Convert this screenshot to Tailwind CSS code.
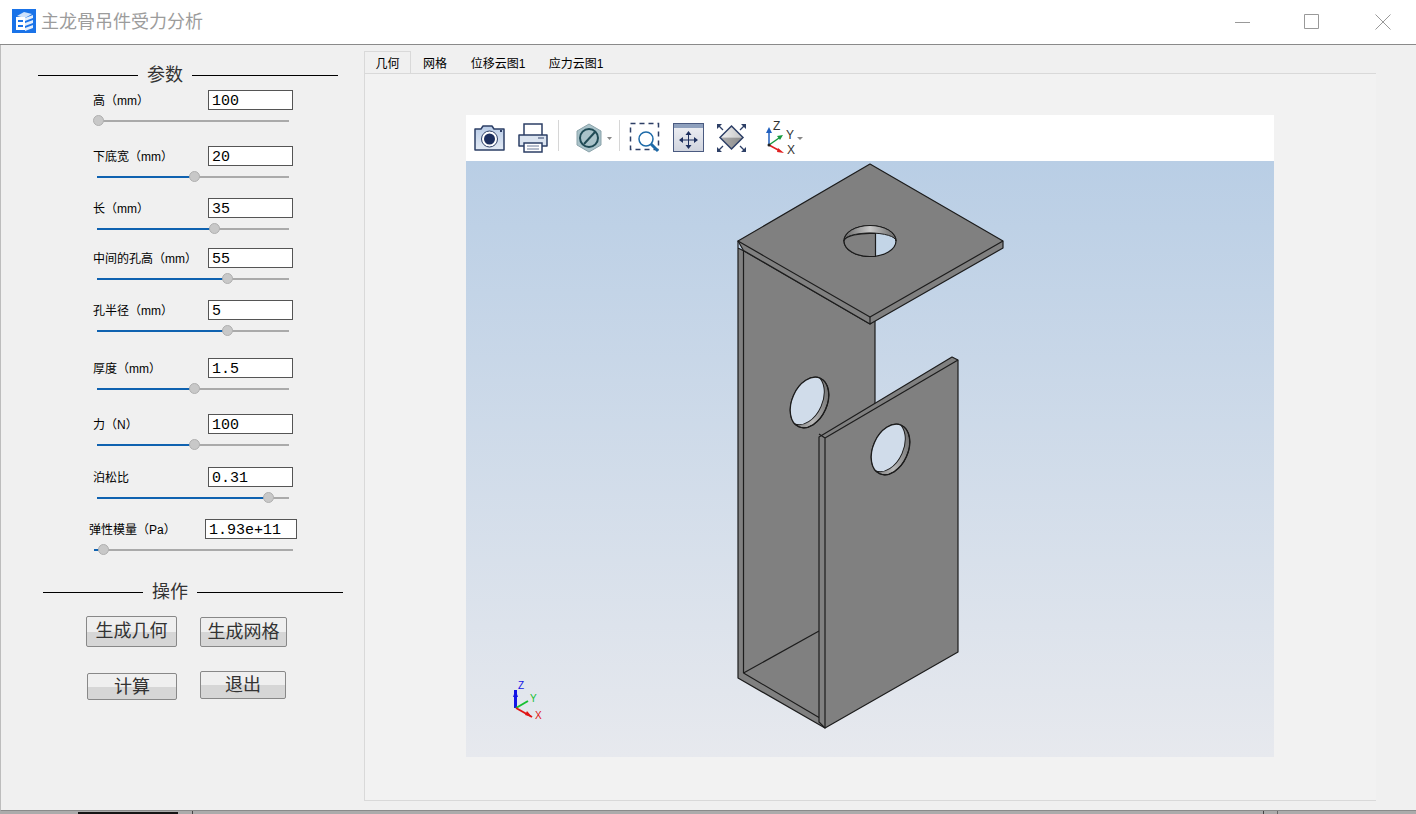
<!DOCTYPE html>
<html lang="zh">
<head>
  <meta charset="UTF-8" />
  <title>主龙骨吊件受力分析</title>
  <script src="https://cdn.jsdelivr.net/npm/@tailwindcss/browser@4"></script>
</head>
<body class="w-[1416px] h-[814px] overflow-hidden bg-[#f0f0f0] font-['Liberation_Sans','Noto_Sans_CJK_SC',sans-serif] text-black">
  <!-- title bar -->
  <header class="h-[45px] bg-white border-b border-[#8a8a8a] flex items-center pl-3">
    <svg width="24" height="24" viewBox="0 0 24 24" class="mb-[2px]">
      <rect width="24" height="24" fill="#1a73e8"/>
      <path d="M5 7 12 3l8 2-7 4z" fill="#cfe2fb"/>
      <path d="M4 8h9v13H4z" fill="#fff"/>
      <path d="M6 11h5v2H6zM6 16h5v2H6z" fill="#1a73e8"/>
      <path d="M13 9l8-3v3l-8 3zM13 14l8-3v3l-8 3zM13 19l8-3v3l-8 3z" fill="#e3eefc"/>
    </svg>
    <span class="ml-[5px] text-[18px] text-[#9c9c9c]">主龙骨吊件受力分析</span>
    <div class="ml-auto flex items-center">
      <svg width="16" height="16" viewBox="0 0 16 16" class="mr-[53px]"><path d="M0 8.500h15" stroke="#999" fill="none"/></svg>
      <svg width="16" height="16" viewBox="0 0 16 16" class="mr-[55px]"><path d="M.5.5h14v14H.5z" stroke="#999" fill="none"/></svg>
      <svg width="16" height="16" viewBox="0 0 16 16" class="mr-[25px]"><path d="M.5.5l15 15M15.500.5l-15 15" stroke="#999" fill="none"/></svg>
    </div>
  </header>

  <div class="flex h-[766px] border-l border-[#bdbdbd] border-b border-b-[#8a8a8a]">
    <!-- parameters -->
    <aside class="w-[363px] shrink-0">
      <div class="flex items-center ml-[37px] w-[300px] h-[20px] mt-[20px]">
        <span class="h-px flex-1 bg-black"></span>
        <span class="w-[54px] text-center text-[18px] text-[#333]">参数</span>
        <span class="h-px w-[146px] bg-black"></span>
      </div>
      <div class="ml-[92px] w-[200px] text-[12px]">
        <!-- 高 -->
        <div class="flex items-center h-[20px] mt-[5px]"><span class="w-[115px] pt-[2px]">高（mm）</span><span class="w-[85px] h-[20px] bg-white border border-[#555] font-['Liberation_Mono',monospace] text-[15px] leading-[20px] pl-[3px] pt-px">100</span></div>
        <div class="relative h-[36px] pt-[10px]"><div class="h-[2px] ml-[4px] w-[192px] bg-[#aaa]"></div><span class="absolute left-0 top-[5px] size-[11px] rounded-full bg-[#c8c8c8] border border-[#b0b0b0]"></span></div>

        <div class="flex items-center h-[20px]"><span class="w-[115px] pt-[2px]">下底宽（mm）</span><span class="w-[85px] h-[20px] bg-white border border-[#555] font-['Liberation_Mono',monospace] text-[15px] leading-[20px] pl-[3px] pt-px">20</span></div>
        <div class="relative h-[32px] pt-[10px]"><div class="h-[2px] ml-[4px] w-[192px] bg-[#aaa]"><div class="h-[2px] w-[97px] bg-[#0f62b0]"></div></div><span class="absolute left-[96px] top-[5px] size-[11px] rounded-full bg-[#c8c8c8] border border-[#b0b0b0]"></span></div>

        <div class="flex items-center h-[20px]"><span class="w-[115px] pt-[2px]">长（mm）</span><span class="w-[85px] h-[20px] bg-white border border-[#555] font-['Liberation_Mono',monospace] text-[15px] leading-[20px] pl-[3px] pt-px">35</span></div>
        <div class="relative h-[30px] pt-[10px]"><div class="h-[2px] ml-[4px] w-[192px] bg-[#aaa]"><div class="h-[2px] w-[117px] bg-[#0f62b0]"></div></div><span class="absolute left-[116px] top-[5px] size-[11px] rounded-full bg-[#c8c8c8] border border-[#b0b0b0]"></span></div>

        <div class="flex items-center h-[20px]"><span class="w-[115px] pt-[2px]">中间的孔高（mm）</span><span class="w-[85px] h-[20px] bg-white border border-[#555] font-['Liberation_Mono',monospace] text-[15px] leading-[20px] pl-[3px] pt-px">55</span></div>
        <div class="relative h-[32px] pt-[10px]"><div class="h-[2px] ml-[4px] w-[192px] bg-[#aaa]"><div class="h-[2px] w-[130px] bg-[#0f62b0]"></div></div><span class="absolute left-[129px] top-[5px] size-[11px] rounded-full bg-[#c8c8c8] border border-[#b0b0b0]"></span></div>

        <div class="flex items-center h-[20px]"><span class="w-[115px] pt-[2px]">孔半径（mm）</span><span class="w-[85px] h-[20px] bg-white border border-[#555] font-['Liberation_Mono',monospace] text-[15px] leading-[20px] pl-[3px] pt-px">5</span></div>
        <div class="relative h-[38px] pt-[10px]"><div class="h-[2px] ml-[4px] w-[192px] bg-[#aaa]"><div class="h-[2px] w-[130px] bg-[#0f62b0]"></div></div><span class="absolute left-[129px] top-[5px] size-[11px] rounded-full bg-[#c8c8c8] border border-[#b0b0b0]"></span></div>

        <div class="flex items-center h-[20px]"><span class="w-[115px] pt-[2px]">厚度（mm）</span><span class="w-[85px] h-[20px] bg-white border border-[#555] font-['Liberation_Mono',monospace] text-[15px] leading-[20px] pl-[3px] pt-px">1.5</span></div>
        <div class="relative h-[36px] pt-[10px]"><div class="h-[2px] ml-[4px] w-[192px] bg-[#aaa]"><div class="h-[2px] w-[97px] bg-[#0f62b0]"></div></div><span class="absolute left-[96px] top-[5px] size-[11px] rounded-full bg-[#c8c8c8] border border-[#b0b0b0]"></span></div>

        <div class="flex items-center h-[20px]"><span class="w-[115px] pt-[2px]">力（N）</span><span class="w-[85px] h-[20px] bg-white border border-[#555] font-['Liberation_Mono',monospace] text-[15px] leading-[20px] pl-[3px] pt-px">100</span></div>
        <div class="relative h-[33px] pt-[10px]"><div class="h-[2px] ml-[4px] w-[192px] bg-[#aaa]"><div class="h-[2px] w-[97px] bg-[#0f62b0]"></div></div><span class="absolute left-[96px] top-[5px] size-[11px] rounded-full bg-[#c8c8c8] border border-[#b0b0b0]"></span></div>

        <div class="flex items-center h-[20px]"><span class="w-[115px] pt-[2px]">泊松比</span><span class="w-[85px] h-[20px] bg-white border border-[#555] font-['Liberation_Mono',monospace] text-[15px] leading-[20px] pl-[3px] pt-px">0.31</span></div>
        <div class="relative h-[32px] pt-[10px]"><div class="h-[2px] ml-[4px] w-[192px] bg-[#aaa]"><div class="h-[2px] w-[171px] bg-[#0f62b0]"></div></div><span class="absolute left-[170px] top-[5px] size-[11px] rounded-full bg-[#c8c8c8] border border-[#b0b0b0]"></span></div>

        <div class="flex items-center h-[20px] -ml-[4px] w-[208px]"><span class="w-[116px] pt-[2px]">弹性模量（Pa）</span><span class="w-[92px] h-[20px] bg-white border border-[#555] font-['Liberation_Mono',monospace] text-[15px] leading-[20px] pl-[3px] pt-px whitespace-nowrap">1.93e+11</span></div>
        <div class="relative h-[30px] pt-[10px] -ml-[4px] w-[208px]"><div class="h-[2px] ml-[5px] w-[199px] bg-[#aaa]"><div class="h-[2px] w-[8px] bg-[#0f62b0]"></div></div><span class="absolute left-[9px] top-[5px] size-[11px] rounded-full bg-[#c8c8c8] border border-[#b0b0b0]"></span></div>
      </div>

      <div class="flex items-center ml-[42px] w-[300px] h-[20px] mt-[13px]">
        <span class="h-px flex-1 bg-black"></span>
        <span class="w-[54px] text-center text-[18px] text-[#333]">操作</span>
        <span class="h-px w-[146px] bg-black"></span>
      </div>
      <div class="ml-[85px] mt-[14px] flex items-start text-[18px] text-[#333]">
        <button class="w-[91px] h-[31px] rounded-[2px] border border-[#888] bg-[linear-gradient(#efefef_50%,#d6d6d6_50%)]">生成几何</button>
        <button class="ml-[23px] mt-[1px] w-[87px] h-[30px] rounded-[2px] border border-[#888] bg-[linear-gradient(#efefef_50%,#d6d6d6_50%)] whitespace-nowrap">生成网格</button>
      </div>
      <div class="ml-[86px] mt-[24px] flex items-start text-[18px] text-[#333]">
        <button class="mt-[2px] w-[90px] h-[27px] rounded-[2px] border border-[#888] bg-[linear-gradient(#efefef_50%,#d6d6d6_50%)]">计算</button>
        <button class="ml-[23px] w-[86px] h-[28px] rounded-[2px] border border-[#888] bg-[linear-gradient(#efefef_50%,#d6d6d6_50%)]">退出</button>
      </div>
    </aside>

    <!-- tabs + viewer -->
    <main class="w-[1012px] pt-[6px]">
      <div class="flex items-end h-[22px] text-[12px]">
        <span class="w-[47px] h-[22px] flex items-center justify-center pt-[2px] border border-b-0 border-[#d9d9d9] bg-[#f0f0f0]">几何</span>
        <span class="w-[48px] text-center">网格</span>
        <span class="w-[78px] text-center">位移云图1</span>
        <span class="w-[78px] text-center">应力云图1</span>
      </div>
      <div class="h-[728px] border border-[#d9d9d9] border-r-0 bg-[#f2f2f2] pt-[41px] pl-[101px]">
        <div class="w-[808px] h-[46px] bg-white relative">
          <svg width="808" height="46" viewBox="0 0 808 46" class="block">
            <defs>
              <linearGradient id="camBody" x1="0" y1="0" x2="0" y2="1"><stop offset="0" stop-color="#b8cbe6"/><stop offset="1" stop-color="#e4ebf5"/></linearGradient>
              <linearGradient id="fitBody" x1="0" y1="0" x2="0" y2="1"><stop offset="0" stop-color="#f0f1f5"/><stop offset="1" stop-color="#d0d4de"/></linearGradient>
              <linearGradient id="diaTop" x1="0" y1="0" x2="1" y2="0"><stop offset="0" stop-color="#f2f2f2"/><stop offset="1" stop-color="#c4c4c4"/></linearGradient>
              <linearGradient id="diaBot" x1="0" y1="0" x2="1" y2="0"><stop offset="0" stop-color="#b0b0b0"/><stop offset="1" stop-color="#8a8a8a"/></linearGradient>
            </defs>
            <!-- camera -->
            <path d="M9 14h6l2-3h9l2 3h10v21H9z" fill="url(#camBody)" stroke="#2d3f66" stroke-width="1.500" stroke-linejoin="round"/>
            <circle cx="23.500" cy="24" r="8" fill="#fff" stroke="#2d3f66"/>
            <circle cx="23.500" cy="24" r="5.500" fill="#1d2f5e"/>
            <rect x="34" y="15" width="2" height="2" fill="#2d3f66"/>
            <!-- printer -->
            <path d="M58 20V9h18v11" fill="#fff" stroke="#2d3f66" stroke-width="1.500"/>
            <path d="M53 31V20h28v11z" fill="#dbe4f0" stroke="#2d3f66" stroke-width="1.500" stroke-linejoin="round"/>
            <path d="M58 28h18v9H58z" fill="#fff" stroke="#2d3f66" stroke-width="1.500"/>
            <path d="M61 31h12M61 34h12" stroke="#6b7a99"/>
            <path d="M72 23h6" stroke="#6b7a99" stroke-width="1.500"/>
            <path d="M92.500 5v31M153.500 5v31" stroke="#d6d6d6"/>
            <!-- section plane -->
            <path d="M123 9l12 7v14l-12 7-12-7V16z" fill="#a9c2c9" stroke="#8ba3aa" stroke-width="1"/>
            <circle cx="123" cy="23" r="9" fill="#a9c2c9" stroke="#1f4a55" stroke-width="2"/>
            <path d="M118 29l11-12" stroke="#1f4a55" stroke-width="2"/>
            <path d="M141 22h5l-2.500 3z" fill="#888"/>
            <!-- zoom window -->
            <path d="M164.500 8.500h28v26h-28z" fill="none" stroke="#2d3f66" stroke-width="1.500" stroke-dasharray="5 4"/>
            <circle cx="180" cy="24" r="7" fill="#fff" stroke="#1d6aa8" stroke-width="1.500"/>
            <path d="M185 29l7 7" stroke="#1d6aa8" stroke-width="3"/>
            <!-- fit -->
            <rect x="207.500" y="8.500" width="30" height="28" fill="url(#fitBody)" stroke="#4a5a80"/>
            <rect x="208" y="9" width="29" height="4" fill="#8ea0bd"/>
            <path d="M222.500 19v12M216 25h13" stroke="#1d2f5e" fill="none"/>
            <path d="M222.500 16l-3 4h6zM222.500 34l-3-4h6zM213 25l4-3v6zM232 25l-4-3v6z" fill="#1d2f5e"/>
            <!-- zoom to area -->
            <path d="M254 22.500L265.500 11 277 22.500z" fill="url(#diaTop)"/>
            <path d="M254 22.500L265.500 34 277 22.500z" fill="url(#diaBot)"/>
            <path d="M265.500 11L277 22.500 265.500 34 254 22.500z" fill="none" stroke="#2d3f66" stroke-width="1.500"/>
            <path d="M253 11l4 4M278 11l-4 4M253 35l4-4M278 35l-4-4" stroke="#2d3f66" stroke-width="1.300"/>
            <path d="M251 9h5l-5 5zM280 9h-5l5 5zM251 37h5l-5-5zM280 37h-5l5-5z" fill="#2d3f66"/>
            <!-- triad -->
            <path d="M303 30V16" stroke="#1f5fbf" stroke-width="1.500"/><path d="M303 12l-3 6h6z" fill="#1f5fbf"/>
            <path d="M303 30l10-7" stroke="#179a3f" stroke-width="1.500"/><path d="M317 20l-6 1 3 4z" fill="#179a3f"/>
            <path d="M303 30l11 6" stroke="#e02020" stroke-width="1.500"/><path d="M318 38l-6-5-1 4z" fill="#e02020"/>
            <circle cx="303" cy="30" r="1.500" fill="#222"/>
            <path d="M331 22h6l-3 3z" fill="#888"/>
          </svg>
          <span class="absolute left-[307px] top-[5px] text-[12px] leading-[12px] text-[#333]">Z</span>
          <span class="absolute left-[320px] top-[14px] text-[12px] leading-[12px] text-[#333]">Y</span>
          <span class="absolute left-[321px] top-[29px] text-[12px] leading-[12px] text-[#333]">X</span>
        </div>
        <div class="w-[808px] h-[596px] bg-[linear-gradient(#b9cee5,#e7e9ee)] relative">
          <svg width="808" height="596" viewBox="466 161 808 596" class="block">
            <defs>
              <linearGradient id="wall" x1="0" y1="0" x2="1" y2="0"><stop offset="0" stop-color="#666"/><stop offset="0.5" stop-color="#c9c9c9"/><stop offset="1" stop-color="#666"/></linearGradient>
              <linearGradient id="rim" x1="1" y1="0" x2="0" y2="1"><stop offset="0" stop-color="#555"/><stop offset="0.5" stop-color="#b8b8b8"/><stop offset="1" stop-color="#555"/></linearGradient>
              <clipPath id="hole1"><ellipse cx="809.500" cy="402.500" rx="17.500" ry="26.500" transform="rotate(24 809.500 402.500)"/></clipPath>
              <clipPath id="hole2"><ellipse cx="890.500" cy="449.500" rx="17.500" ry="26.500" transform="rotate(24 890.500 449.500)"/></clipPath>
            </defs>
            <g stroke="#1c1c1c" stroke-width="1.200" stroke-linejoin="round" fill="#808080">
              <!-- web -->
              <path d="M738 241V678L825 728V437L875 407V320L870 324 744 251 738 248z"/>
              <path d="M743.500 250V673" fill="none"/>
              <!-- floor -->
              <path d="M743.500 673L819 631" fill="none"/>
              <path d="M743.500 673L819 717.500" fill="none"/>
              <!-- top plate -->
              <path d="M738 241L870 164 1003 241V248L870 324 743.500 250.500 738 241z"/>
              <path d="M738 241L870 317 1003 241" fill="none"/>
              <path d="M870 317V324" fill="none"/>
              <!-- hole in top -->
              <ellipse cx="870" cy="241" rx="26" ry="15.500" fill="#c3d5e7"/>
              <path d="M844 241A26 15.500 0 0 1 896 241A26 8 0 0 0 844 241z" fill="url(#wall)" stroke-width="1"/>
              <path d="M875.500 233.500V256.300L870 256.500A26 15.500 0 0 1 844 241A26 8 0 0 1 875.500 233.500z"/>
              <!-- hole in web -->
              <ellipse cx="809.500" cy="402.500" rx="17.500" ry="26.500" transform="rotate(24 809.500 402.500)" fill="url(#rim)"/>
              <g clip-path="url(#hole1)">
                <ellipse cx="805" cy="399.500" rx="17.500" ry="26.500" transform="rotate(24 805 399.500)" fill="#d0dcea" stroke-width="1"/>
              </g>
              <ellipse cx="809.500" cy="402.500" rx="17.500" ry="26.500" transform="rotate(24 809.500 402.500)" fill="none"/>
              <!-- front wall -->
              <path d="M819 437L952 357 958 360V652L825 728 819 722z"/>
              <path d="M825 438L958 360" fill="none"/>
              <path d="M819 434L825 438V728" fill="none"/>
              <!-- hole in front wall -->
              <ellipse cx="890.500" cy="449.500" rx="17.500" ry="26.500" transform="rotate(24 890.500 449.500)" fill="url(#rim)"/>
              <g clip-path="url(#hole2)">
                <ellipse cx="886" cy="446.500" rx="17.500" ry="26.500" transform="rotate(24 886 446.500)" fill="#d0dcea" stroke-width="1"/>
              </g>
              <ellipse cx="890.500" cy="449.500" rx="17.500" ry="26.500" transform="rotate(24 890.500 449.500)" fill="none"/>
            </g>
            <!-- corner triad -->
            <path d="M515.500 708V690" stroke="#1414e6" stroke-width="3"/>
            <path d="M515.500 690l-2.500 7h5z" fill="#1414e6"/>
            <path d="M516 708l12-7" stroke="#16c030" stroke-width="2"/>
            <path d="M516 708l16 9" stroke="#e01414" stroke-width="2"/>
            <path d="M532 717l-7-2 2-4z" fill="#e01414"/>
          </svg>
          <span class="absolute left-[52px] top-[520px] text-[10px] leading-[10px] text-[#1414e6]">Z</span>
          <span class="absolute left-[64px] top-[533px] text-[10px] leading-[10px] text-[#16c030]">Y</span>
          <span class="absolute left-[69px] top-[550px] text-[10px] leading-[10px] text-[#e01414]">X</span>
        </div>
      </div>
    </main>
    <div class="w-[40px]"></div>
  </div>

  <!-- what shows of the desktop under the window -->
  <div class="h-[3px] flex bg-[#ababab]">
    <span class="w-[78px]"></span>
    <span class="w-[100px] mt-px bg-[#151515]"></span>
    <span class="w-[14px]"></span>
    <span class="w-px bg-[#444]"></span>
    <span class="w-[1070px]"></span>
    <span class="w-px bg-[#444]"></span>
    <span class="w-[13px]"></span>
    <span class="w-px bg-[#666]"></span>
  </div>
</body>
</html>
